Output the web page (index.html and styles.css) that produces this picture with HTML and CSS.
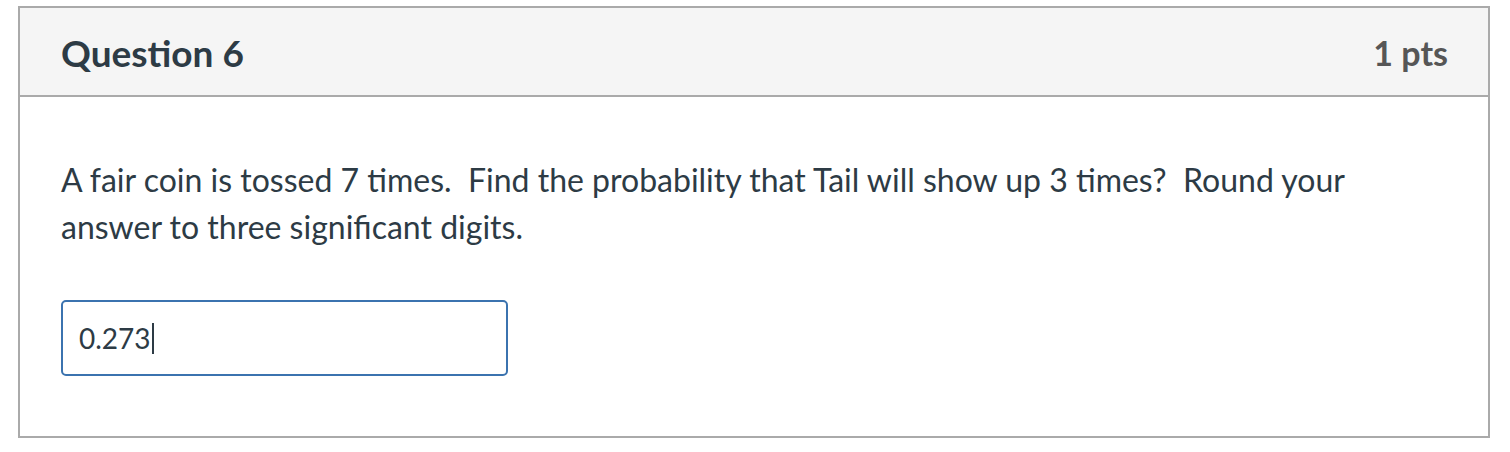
FILE: index.html
```html
<!DOCTYPE html>
<html>
<head>
<meta charset="utf-8">
<link rel="stylesheet" href="styles.css">
</head>
<body>
<div class="question">
  <div class="header">
    <h2 class="title">Question 6</h2>
    <span class="points">1 pts</span>
  </div>
  <div class="content">
    <p class="text">A fair coin is tossed 7 times.&nbsp; Find the probability that Tail will show up 3 times?&nbsp; Round your answer to three significant digits.</p>
    <div class="answer"><span class="value">0.273</span><span class="caret"></span></div>
  </div>
</div>
</body>
</html>
```
FILE: styles.css
```css
html, body {
  margin: 0;
  padding: 0;
  background: #ffffff;
}
body {
  padding: 6px 20px 0 18px;
  font-family: Lato, "Liberation Sans", sans-serif;
  color: #2d3b45;
}
.question {
  border: 2px solid #aaaaaa;
  box-sizing: border-box;
  width: 1472px;
  height: 432px;
  display: flex;
  flex-direction: column;
}
.header {
  background: #f5f5f5;
  border-bottom: 2px solid #aaaaaa;
  height: 89px;
  box-sizing: border-box;
  display: flex;
  align-items: center;
  justify-content: space-between;
  padding: 1px 40px 0 41px;
}
.title {
  margin: 0;
  font-size: 37px;
  font-weight: 700;
  color: #2d3b45;
}
.points {
  font-size: 34px;
  font-weight: 700;
  color: #565656;
}
.content {
  padding: 59px 41px 0 41px;
}
.text {
  margin: 0;
  font-size: 32px;
  line-height: 47px;
  width: 1320px;
}
.answer {
  margin-top: 50px;
  width: 447px;
  height: 76px;
  box-sizing: border-box;
  border: 2px solid #3b73af;
  border-radius: 5px;
  display: flex;
  align-items: center;
  padding-left: 16px;
}
.value {
  font-size: 28px;
  color: #2d3b45;
}
.caret {
  display: inline-block;
  width: 2px;
  height: 31px;
  background: #2d3b45;
  margin-left: 1px;
}
```
